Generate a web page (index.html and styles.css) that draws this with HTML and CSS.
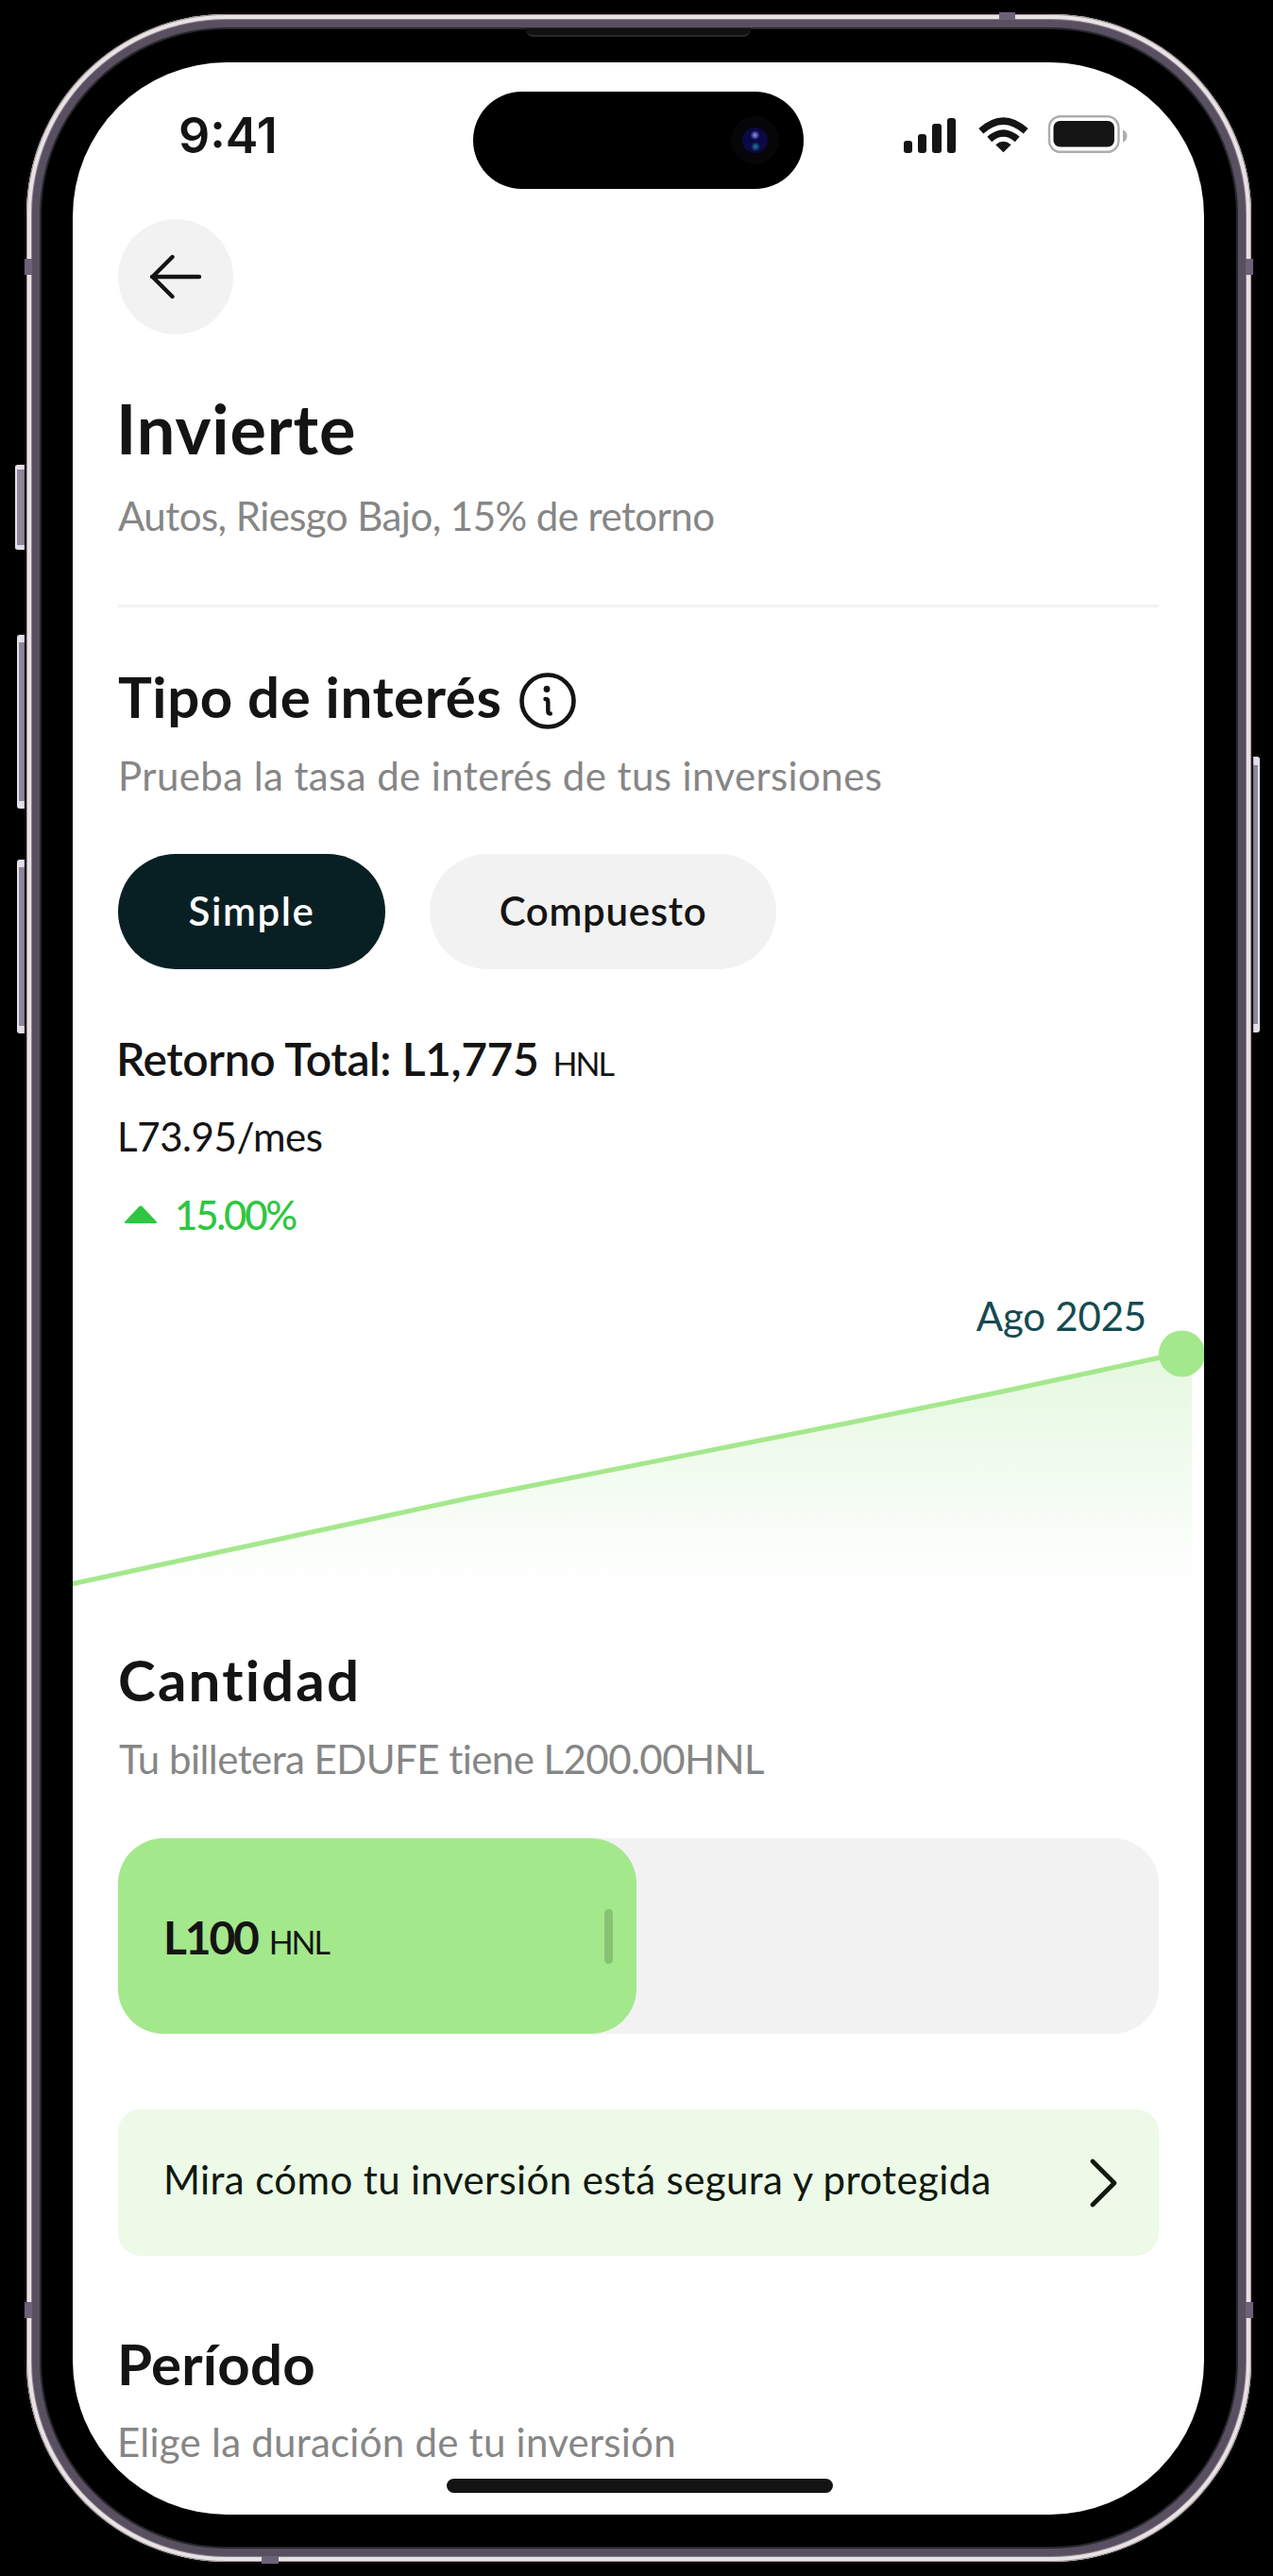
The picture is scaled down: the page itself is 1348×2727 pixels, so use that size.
FILE: index.html
```html
<!DOCTYPE html>
<html lang="es">
<head>
<meta charset="utf-8">
<title>Invierte</title>
<link rel="stylesheet" href="styles.css">
</head>
<body>
<div class="stage">
  <i class="key key-action"></i>
  <i class="key key-up"></i>
  <i class="key key-down"></i>
  <i class="key key-power"></i>
  <div class="phone">
    <i class="band band-tl"></i><i class="band band-bl"></i>
    <i class="band band-tr"></i><i class="band band-br"></i>
    <i class="band band-top"></i><i class="band band-bottom"></i>
    <i class="speaker"></i>
    <div class="screen">
      <div class="island"><i class="lens"></i></div>
      <header class="status">
        <span class="time">9:41</span>
        <svg class="status-icons" width="238" height="42" viewBox="0 0 238 42">
          <g fill="#141414">
            <rect x="1" y="28" width="9" height="13" rx="3"/>
            <rect x="16" y="21" width="9" height="20" rx="3"/>
            <rect x="31" y="10" width="10" height="31" rx="3"/>
            <rect x="47" y="4" width="9" height="37" rx="3"/>
            <rect x="159.500" y="7" width="64.500" height="27.500" rx="7"/>
            <path d="M106.500 40.300L98.300 32.200Q106.500 25.500 114.700 32.200Z"/>
          </g>
          <path d="M82.800 17.800Q106.500 -3.600 130.200 17.800M91.800 26.500Q106.500 13.500 121.200 26.500" fill="none" stroke="#141414" stroke-width="7.400"/>
          <rect x="155" y="2.200" width="73.500" height="37.600" rx="12" fill="none" stroke="#adadad" stroke-width="2.400"/>
          <path d="M233 16.500Q237.500 18 237.500 23T233 29.500Z" fill="#adadad"/>
        </svg>
      </header>
      <main class="content">
        <button class="back" aria-label="Volver">
          <svg width="56" height="48" viewBox="0 0 56 48" fill="none" stroke="#141414" stroke-width="4.400" stroke-linecap="round" stroke-linejoin="round"><path d="M53 24H3M24.500 3L3.500 24L24.500 45"/></svg>
        </button>
        <h1 class="title">Invierte</h1>
        <p class="muted product">Autos, Riesgo Bajo, 15% de retorno</p>
        <hr class="rule">
        <div class="heading-row">
          <h2 class="heading interest">Tipo de interés</h2>
          <svg class="info" width="60" height="60" viewBox="0 0 60 60" fill="none" stroke="#141414" stroke-linecap="round" stroke-linejoin="round"><circle cx="30" cy="30" r="27.500" stroke-width="4.600"/><path d="M27.500 28Q30.300 28 30.300 31V40.500Q30.300 43.500 32.800 43.500" stroke-width="4.400"/><circle cx="29" cy="17.500" r="3.400" fill="#141414" stroke="none"/></svg>
        </div>
        <p class="muted try">Prueba la tasa de interés de tus inversiones</p>
        <div class="tabs">
          <button class="tab tab-active">Simple</button>
          <button class="tab tab-compound">Compuesto</button>
        </div>
        <p class="total"><span>Retorno Total: L1,775</span><small class="unit">HNL</small></p>
        <p class="monthly">L73.95/mes</p>
        <p class="rate"><svg width="36" height="20" viewBox="0 0 36 20"><path d="M16 1.500Q18 -.5 20 1.500L34.500 17Q36 19 34 19H2Q0 19 1.500 17Z" fill="#2fc641"/></svg><span>15.00%</span></p>
        <div class="chart">
          <svg width="1198" height="380" viewBox="0 0 1198 380">
            <defs><linearGradient id="area" x1="0" y1="122" x2="0" y2="370" gradientUnits="userSpaceOnUse"><stop offset="0" stop-color="#e5f8df"/><stop offset=".45" stop-color="#f0fbee"/><stop offset="1" stop-color="#fff"/></linearGradient></defs>
            <path d="M0 366L419 275L823 195L980 163L1175 122H1185V380H0Z" fill="url(#area)"/>
            <path d="M-4 366.500L419 275L823 195L980 163L1175 121" fill="none" stroke="#a4e88c" stroke-width="5"/>
            <circle cx="1174.500" cy="122" r="24.500" fill="#a4e88c"/>
          </svg>
          <span class="chart-label">Ago 2025</span>
        </div>
        <h2 class="heading amount">Cantidad</h2>
        <p class="muted wallet">Tu billetera EDUFE tiene L200.00HNL</p>
        <div class="slider">
          <div class="slider-fill">
            <span class="slider-value">L100</span><small class="unit">HNL</small>
            <i class="handle"></i>
          </div>
        </div>
        <a class="notice">
          <span>Mira cómo tu inversión está segura y protegida</span>
          <svg width="30" height="54" viewBox="0 0 30 54" fill="none" stroke="#11190f" stroke-width="4.600" stroke-linecap="round" stroke-linejoin="round"><path d="M3 4L26 27L3 50"/></svg>
        </a>
        <h2 class="heading period">Período</h2>
        <p class="muted duration">Elige la duración de tu inversión</p>
      </main>
      <i class="home"></i>
    </div>
  </div>
</div>
</body>
</html>
```
FILE: styles.css
```css
* { box-sizing: border-box; }
body { margin: 0; background: #000; font-family: Lato, "Liberation Sans", sans-serif; color: #141414; }
h1, h2, p { margin: 0; font-weight: 400; white-space: nowrap; }
button { border: 0; padding: 0; font: inherit; color: inherit; }
svg { display: block; flex: none; }

/* Device shell */
.stage { position: relative; width: 1348px; height: 2727px; padding: 15px 23px 15px 28px; overflow: hidden; }
.phone {
  position: relative; height: 2697px; padding: 51px 50px 50px 49px; border-radius: 212px; background: #000;
  box-shadow: inset 0 0 0 1px #9c949b, inset 0 0 0 5px #e9e2e3, inset 0 0 0 6px #8d8490, inset 0 0 0 14px #585061, inset 0 0 0 16px #29272c, 0 0 3px 1px #1b171e;
}
.key { position: absolute; border: 2px solid #e4dfea; background: #8f879c; }
.key-action { left: 16px; top: 492px; width: 10px; height: 90px; border-width: 5px 0 5px 2px; border-radius: 3px 0 0 3px; }
.key-up, .key-down { left: 18px; width: 8px; height: 184px; border-width: 8px 0 8px 2px; border-radius: 3px 0 0 3px; }
.key-up { top: 672px; }
.key-down { top: 910px; }
.key-power { left: 1327px; top: 801px; width: 7px; height: 292px; border-width: 9px 2px 9px 0; border-radius: 0 3px 3px 0; }
.band { position: absolute; background: #6b6277; }
.band-tl, .band-bl { left: -2px; width: 8px; height: 17px; }
.band-tr, .band-br { right: -2px; width: 8px; height: 17px; }
.band-tl, .band-tr { top: 259px; }
.band-bl, .band-br { top: 2422px; }
.band-top { left: 1030px; top: -2px; width: 17px; height: 8px; }
.band-bottom { left: 249px; bottom: -2px; width: 18px; height: 8px; }
.speaker { position: absolute; left: 529px; top: 15px; width: 238px; height: 9px; background: #111; border-bottom: 2px solid #2b2a2c; border-radius: 0 0 8px 8px; }

.screen { position: relative; height: 2596px; border-radius: 163px; background: #fff; overflow: hidden; }
.island { position: absolute; left: 424px; top: 31px; width: 350px; height: 103px; border-radius: 52px; background: #000; }
.lens { position: absolute; right: 38px; top: 38px; width: 27px; height: 27px; border-radius: 50%; background: radial-gradient(circle at 50% 30%, #7b79d8 0 1px, transparent 5px), radial-gradient(circle at 52% 75%, #1d6a91 0 1px, transparent 5px), #0b0944; box-shadow: 0 0 0 12px #060508; }
.home { position: absolute; left: 396px; top: 2558px; width: 409px; height: 15px; border-radius: 8px; background: #141414; }

.status { display: flex; justify-content: space-between; height: 166px; padding: 46px 81px 0 112px; }
.time { font: 600 52px/64px Inter, sans-serif; letter-spacing: 0; }
.status-icons { margin-top: 9px; }

/* Investment form */
.content { display: flex; flex-direction: column; padding: 0 48px; }
.back { display: grid; place-items: center; width: 122px; height: 122px; border-radius: 50%; background: #f2f2f2; padding-right: 1px; }
.title { margin: 56px 0 0 -2px; font-size: 72px; line-height: 86px; font-weight: 700; letter-spacing: .9px; }
.muted { font-size: 42px; line-height: 50px; color: #868686; }
.product { margin-top: 25px; letter-spacing: -.55px; }
.rule { width: 100%; height: 3px; margin: 69px 0 58px; border: 0; background: #f3f3f3; }
.heading-row { display: flex; height: 70px; gap: 19px; }
.info { margin-top: 11px; }
.heading { font-size: 60px; line-height: 72px; font-weight: 700; }
.interest { letter-spacing: .6px; }
.try { margin: 25px 0 0 0; letter-spacing: .4px; }
.tabs { display: flex; gap: 47px; margin-top: 58px; }
.tab { width: 283px; height: 122px; padding-bottom: 2px; border-radius: 61px; background: #f2f2f2; font-size: 42px; font-weight: 600; }
.tab-active { background: #082024; color: #fff; letter-spacing: 1.6px; }
.tab-compound { width: 367px; letter-spacing: .7px; }
.total { display: flex; align-items: baseline; gap: 15px; height: 58px; margin: 66px 0 0 -2px; font-size: 48px; line-height: 58px; font-weight: 600; letter-spacing: -.4px; }
.unit { font-size: 34px; font-weight: 400; letter-spacing: -2px; }
.monthly { margin: 28px 0 0 -1px; font-size: 42px; line-height: 50px; letter-spacing: -.4px; }
.rate { display: flex; align-items: center; gap: 18px; margin: 33px 0 0 6px; font-size: 42px; line-height: 50px; font-weight: 500; letter-spacing: -2.2px; color: #2fc641; }
.chart { position: relative; height: 380px; margin: 0 -48px; }
.chart-label { position: absolute; right: 61px; top: 57px; font-size: 42px; line-height: 50px; letter-spacing: -.2px; color: #144a50; }
.amount { margin-top: 51px; letter-spacing: 2.2px; }
.wallet { margin: 23px 0 0 1px; letter-spacing: -.55px; }
.slider { height: 207px; margin-top: 59px; border-radius: 48px; background: #f2f2f2; }
.slider-fill { position: relative; display: flex; align-items: baseline; gap: 12px; width: 549px; height: 207px; padding: 76px 0 0 48px; border-radius: 48px; background: #a4e88c; }
.slider-value { font-size: 48px; line-height: 58px; font-weight: 700; letter-spacing: -2.2px; }
.handle { position: absolute; right: 25px; top: 75px; width: 9px; height: 58px; border-radius: 5px; background: #88c374; }
.notice { display: flex; align-items: center; justify-content: space-between; height: 155px; margin-top: 80px; padding: 0 43px 0 48px; border-radius: 24px; background: #ecfae7; color: #11190f; font-size: 42px; line-height: 50px; letter-spacing: .38px; }
.notice span { padding-bottom: 7px; }
.period { margin: 78px 0 0 -1px; letter-spacing: .2px; }
.duration { margin: 22px 0 0 -1px; letter-spacing: .25px; }
```
